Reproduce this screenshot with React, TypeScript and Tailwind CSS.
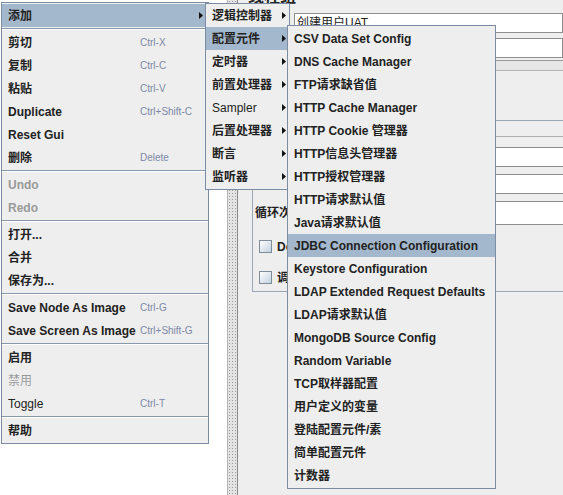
import React from 'react';

type MenuItem =
  | { sep: true }
  | { label: string; shortcut?: string; sub?: boolean; active?: boolean; disabled?: boolean; plain?: boolean };

const mainItems: MenuItem[] = [
  { label: '添加', sub: true, active: true },
  { sep: true },
  { label: '剪切', shortcut: 'Ctrl-X' },
  { label: '复制', shortcut: 'Ctrl-C' },
  { label: '粘贴', shortcut: 'Ctrl-V' },
  { label: 'Duplicate', shortcut: 'Ctrl+Shift-C' },
  { label: 'Reset Gui' },
  { label: '删除', shortcut: 'Delete' },
  { sep: true },
  { label: 'Undo', disabled: true },
  { label: 'Redo', disabled: true },
  { sep: true },
  { label: '打开...' },
  { label: '合并' },
  { label: '保存为...' },
  { sep: true },
  { label: 'Save Node As Image', shortcut: 'Ctrl-G' },
  { label: 'Save Screen As Image', shortcut: 'Ctrl+Shift-G' },
  { sep: true },
  { label: '启用' },
  { label: '禁用', disabled: true, plain: true },
  { label: 'Toggle', shortcut: 'Ctrl-T', plain: true },
  { sep: true },
  { label: '帮助' },
];

const addItems: MenuItem[] = [
  { label: '逻辑控制器', sub: true },
  { label: '配置元件', sub: true, active: true },
  { label: '定时器', sub: true },
  { label: '前置处理器', sub: true },
  { label: 'Sampler', sub: true, plain: true },
  { label: '后置处理器', sub: true },
  { label: '断言', sub: true },
  { label: '监听器', sub: true },
];

const configItems: MenuItem[] = [
  { label: 'CSV Data Set Config' },
  { label: 'DNS Cache Manager' },
  { label: 'FTP请求缺省值' },
  { label: 'HTTP Cache Manager' },
  { label: 'HTTP Cookie 管理器' },
  { label: 'HTTP信息头管理器' },
  { label: 'HTTP授权管理器' },
  { label: 'HTTP请求默认值' },
  { label: 'Java请求默认值' },
  { label: 'JDBC Connection Configuration', active: true },
  { label: 'Keystore Configuration' },
  { label: 'LDAP Extended Request Defaults' },
  { label: 'LDAP请求默认值' },
  { label: 'MongoDB Source Config' },
  { label: 'Random Variable' },
  { label: 'TCP取样器配置' },
  { label: '用户定义的变量' },
  { label: '登陆配置元件/素' },
  { label: '简单配置元件' },
  { label: '计数器' },
];

const Arrow: React.FC<{ className?: string }> = ({ className }) => (
  <svg width="4" height="7" viewBox="0 0 4 7" className={className}>
    <path d="M0 0 L4 3.5 L0 7 Z" fill="#111" />
  </svg>
);

const Separator = () => (
  <div className="h-[4px] flex flex-col pt-[1px]">
    <div className="h-px bg-[#8797ad]" />
    <div className="h-px bg-white" />
  </div>
);

const MenuRows: React.FC<{ items: MenuItem[]; labelWidth?: string; arrowGap: string }> = ({ items, labelWidth, arrowGap }) => (
  <>
    {items.map((item, i) => {
      if ('sep' in item) return <Separator key={i} />;
      return (
        <div key={i} className={`flex items-center h-[23px] pl-[6px] ${item.active ? 'bg-[#a3b8cc]' : ''}`}>
          <span
            className={`whitespace-nowrap text-[12px] shrink-0 ${labelWidth ?? ''} ${item.plain ? 'font-normal' : 'font-bold'} ${
              item.disabled ? 'text-[#9a9a9a]' : 'text-[#222222]'
            }`}
          >
            {item.label}
          </span>
          {item.shortcut && <span className="whitespace-nowrap text-[10px] text-[#7d88a6]">{item.shortcut}</span>}
          {item.sub && <Arrow className={`ml-auto ${arrowGap}`} />}
        </div>
      );
    })}
  </>
);

const Checkbox = () => (
  <div className="w-[13px] h-[13px] border border-[#7f8c99] bg-gradient-to-br from-white to-[#c3d1e0] shrink-0" />
);

export default function App() {
  return (
    <div className="relative w-[563px] h-[495px] overflow-hidden bg-white font-['Liberation_Sans','Noto_Sans_CJK_SC',sans-serif] text-[#222222]">
      {/* window behind the popup */}
      <div className="flex h-full">
        <div className="w-[227px] shrink-0 bg-white" />
        <div className="w-[11px] shrink-0 border-l border-[#b5b5b5] border-r border-r-[#8a8a8a] bg-[#e4e4e4] bg-[radial-gradient(circle,#9c9c9c_0.7px,transparent_0.9px)] bg-[length:3px_3px]" />
        <div className="flex-1 bg-[#eeeeee] flex flex-col overflow-hidden">
          <div className="h-[13px] overflow-hidden pl-[10px]">
            <div className="-mt-[13px] text-[16px] font-bold leading-[20px]">线程组</div>
          </div>
          <div className="flex h-[20px]">
            <span className="w-[56px] shrink-0" />
            <div className="flex-1 bg-white border border-[#8e8e8e] text-[12px] leading-[18px] pl-[2px] whitespace-nowrap">创建用户UAT</div>
          </div>
          <div className="flex h-[20px] mt-[5px]">
            <span className="w-[56px] shrink-0" />
            <div className="flex-1 bg-white border border-[#8e8e8e]" />
          </div>
          <div className="h-[11px] mt-[2px] border-t border-[#9a9a9a] border-b border-b-[#b4b4b4] bg-[#e6e6e6]" />
          <div className="h-[49px]" />
          <div className="ml-[14px] mr-[-20px] h-[172px] border border-[#9aa5b5] flex flex-col">
            <div className="h-[16px] border-b border-[#b0b0b0]" />
            <div className="h-[10px]" />
            <div className="flex h-[20px]">
              <span className="w-[90px] shrink-0" />
              <div className="flex-1 bg-white border border-[#8e8e8e]" />
            </div>
            <div className="flex h-[20px] mt-[7px]">
              <span className="w-[90px] shrink-0" />
              <div className="flex-1 bg-white border border-[#8e8e8e]" />
            </div>
            <div className="flex items-center h-[24px] mt-[7px]">
              <span className="w-[90px] shrink-0 pl-[2px] text-[12px] font-bold whitespace-nowrap">循环次数</span>
              <div className="flex-1 h-full bg-white border border-[#8e8e8e]" />
            </div>
            <div className="flex items-center gap-[5px] h-[13px] mt-[15px] pl-[6px]">
              <Checkbox />
              <span className="text-[12px] font-bold whitespace-nowrap">Delay Thread creation until needed</span>
            </div>
            <div className="flex items-center gap-[5px] h-[13px] mt-[18px] pl-[6px]">
              <Checkbox />
              <span className="text-[12px] font-bold whitespace-nowrap">调度器</span>
            </div>
          </div>
        </div>
      </div>

      {/* popup menus */}
      <div className="absolute left-[1px] top-[2px] w-[208px] bg-[#eeeeee] border border-[#7b8ca3] pt-[1px] pb-[1px]">
        <MenuRows items={mainItems} labelWidth="w-[132px]" arrowGap="mr-[5px]" />
      </div>
      <div className="absolute left-[205px] top-[3px] w-[85px] bg-[#eeeeee] border border-[#7b8ca3] pb-[1px]">
        <MenuRows items={addItems} arrowGap="mr-[3px]" />
      </div>
      <div className="absolute left-[287px] top-[25px] w-[209px] bg-[#eeeeee] border border-[#7b8ca3] pt-[1px] pb-[1px]">
        <MenuRows items={configItems} arrowGap="mr-[3px]" />
      </div>
    </div>
  );
}
